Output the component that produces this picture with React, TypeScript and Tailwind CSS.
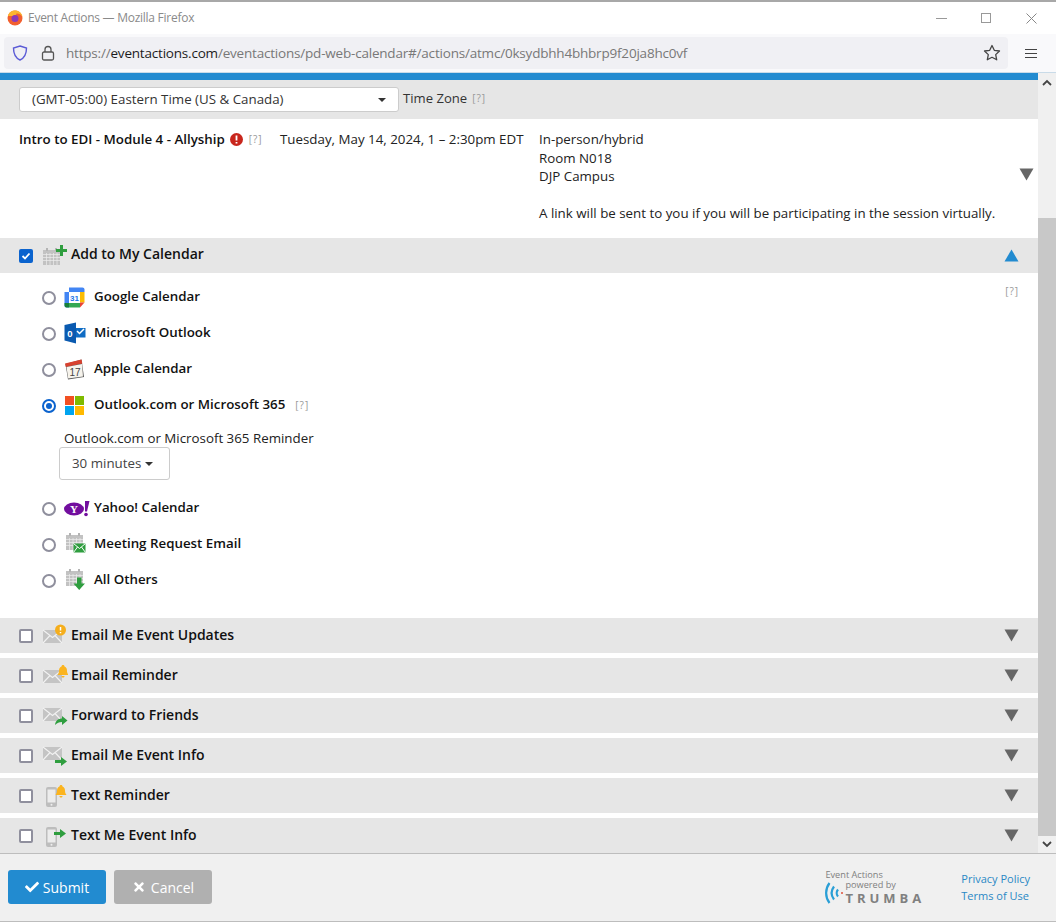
import React from "react";
import { FaCheck, FaTimes } from "react-icons/fa";

const Help = ({ className = "" }: { className?: string }) => (
  <span className={`text-[10px] tracking-[1px] text-[#999] ${className}`}>[?]</span>
);

const Tri = ({ up = false, color = "#666666" }: { up?: boolean; color?: string }) => (
  <svg width="15" height="13" viewBox="0 0 15 13" className="block shrink-0">
    <path d={up ? "M7.5 0.5L14.5 12.5H0.5Z" : "M0.5 0.5H14.5L7.5 12.5Z"} fill={color} />
  </svg>
);

const Cal = ({ x = 0, y = 0 }: { x?: number; y?: number }) => (
  <g transform={`translate(${x} ${y})`}>
    <rect x="0" y="2" width="17" height="15" fill="#c2c2c2" />
    <rect x="3" y="0" width="2" height="3" fill="#b4b4b4" />
    <rect x="12" y="0" width="2" height="3" fill="#b4b4b4" />
    <path d="M0 6.5H17M0 9.5H17M0 12.5H17M3.5 5V17M7 5V17M10.5 5V17M14 5V17" stroke="#ececec" strokeWidth="0.7" />
  </g>
);

const Env = () => (
  <g>
    <path d="M0 3H19V16H0Z" fill="#c4c4c4" />
    <path d="M0 3L9.5 10.5L19 3M0 16L7 8.5M19 16L12 8.5" stroke="#f2f2f2" strokeWidth="1.1" fill="none" />
  </g>
);

const Phone = () => (
  <g>
    <rect x="3" y="2" width="11" height="20" rx="2" fill="#bdbdbd" />
    <rect x="4.5" y="4.5" width="8" height="13" fill="#ececec" />
    <circle cx="8.5" cy="19.7" r="1" fill="#eee" />
  </g>
);

const Bell = ({ x, y }: { x: number; y: number }) => (
  <path
    transform={`translate(${x} ${y})`}
    d="M5 0C6 0 6.5.7 6.5 1.4C8.5 2 9 4 9 6C9 8 10 9 10.5 10H-.5C0 9 1 8 1 6C1 4 1.5 2 3.5 1.4C3.5.7 4 0 5 0ZM3.5 11H6.5C6.5 12 5.8 12.5 5 12.5C4.2 12.5 3.5 12 3.5 11Z"
    fill="#fbb41f"
  />
);

const GreenArrow = ({ x, y }: { x: number; y: number }) => (
  <path transform={`translate(${x} ${y})`} d="M0 3H6V0L12 4.5L6 9V6H0Z" fill="#2f9e3f" />
);

const Svg = ({ children, w = 26, h = 24 }: { children: React.ReactNode; w?: number; h?: number }) => (
  <svg width={w} height={h} viewBox={`0 0 ${w} ${h}`} className="block shrink-0">
    {children}
  </svg>
);

const headerIcons: Record<string, React.ReactNode> = {
  updates: (
    <Svg>
      <g transform="translate(1 3)"><Env /></g>
      <circle cx="18.500" cy="6" r="5.500" fill="#f5ae1c" />
      <path d="M18.500 3V6.500M18.500 8V9.200" stroke="#fff" strokeWidth="1.500" />
    </Svg>
  ),
  reminder: (
    <Svg>
      <g transform="translate(1 3)"><Env /></g>
      <Bell x={16} y={1} />
    </Svg>
  ),
  forward: (
    <Svg>
      <g transform="translate(1 1)"><Env /></g>
      <path d="M13 21C13.500 16.500 16.500 14.500 20 14.500V12L25.500 16.500L20 21V18C17 18 15 19 13 21Z" fill="#2f9e3f" />
    </Svg>
  ),
  info: (
    <Svg>
      <g transform="translate(1 0)"><Env /></g>
      <GreenArrow x={13} y={13} />
    </Svg>
  ),
  text: (
    <Svg>
      <g transform="translate(1 1)"><Phone /></g>
      <Bell x={14} y={1} />
    </Svg>
  ),
  textinfo: (
    <Svg>
      <g transform="translate(1 1)"><Phone /></g>
      <GreenArrow x={12} y={5} />
    </Svg>
  ),
};

const providers: Record<string, React.ReactNode> = {
  google: (
    <svg width="21" height="21" viewBox="0 0 21 21" className="block shrink-0">
      <rect x="0.500" y="0.500" width="20" height="20" rx="2" fill="#fff" />
      <path d="M5 0.500H18.500C19.600 0.500 20.500 1.400 20.500 2.500V5H5Z" fill="#4285f4" />
      <path d="M0.500 5H5V20.500H2.500C1.400 20.500 0.500 19.600 0.500 18.500Z" fill="#4285f4" />
      <path d="M16 5H20.500V15.500H16Z" fill="#fbbc04" />
      <path d="M5 16H16V20.500H5Z" fill="#34a853" />
      <path d="M0.500 16H5V20.500H2.500C1.400 20.500 0.500 19.600 0.500 18.500Z" fill="#188038" />
      <path d="M16 15.500H20.500L16 20.500Z" fill="#ea4335" />
      <text x="10.500" y="14" textAnchor="middle" fontSize="8" fontWeight="700" fill="#1a73e8" fontFamily="Liberation Sans">31</text>
    </svg>
  ),
  outlook: (
    <svg width="22" height="22" viewBox="0 0 22 22" className="block shrink-0">
      <path d="M10 6H21.500V15.500H10Z" fill="#0f6cc4" />
      <path d="M13 9L15.500 11.500L20 7" stroke="#fff" strokeWidth="1.500" fill="none" />
      <path d="M0.500 3L12 0.500V21.500L0.500 18.500Z" fill="#0a5ab0" />
      <text x="6" y="14.500" textAnchor="middle" fontSize="9.500" fontWeight="700" fill="#fff" fontFamily="Liberation Sans">0</text>
    </svg>
  ),
  apple: (
    <svg width="21" height="21" viewBox="0 0 21 21" className="block shrink-0">
      <path d="M1.500 5L17.500 0.500L20 18L4 20.500Z" fill="#555" />
      <path d="M1 4.500L17.500 0.500L18.300 4.500L1.800 8Z" fill="#d8412f" />
      <path d="M2.500 8L18 5L19 17.500L4.200 19.500Z" fill="#f6f3ec" />
      <text x="11" y="16.500" textAnchor="middle" fontSize="10" fill="#444" fontFamily="Liberation Sans">17</text>
    </svg>
  ),
  ms: (
    <svg width="19" height="19" viewBox="0 0 19 19" className="ml-[1px] block shrink-0">
      <rect width="9" height="9" fill="#f25022" />
      <rect x="10" width="9" height="9" fill="#7fba00" />
      <rect y="10" width="9" height="9" fill="#00a4ef" />
      <rect x="10" y="10" width="9" height="9" fill="#ffb900" />
    </svg>
  ),
  yahoo: (
    <svg width="26" height="17" viewBox="0 0 26 17" className="block shrink-0">
      <ellipse cx="10" cy="9" rx="10" ry="6.500" fill="#720e9e" />
      <text x="10" y="13" textAnchor="middle" fontSize="11" fontWeight="700" fill="#fff" fontFamily="Liberation Serif">Y</text>
      <path d="M21 1H25.500L23 11.500H21Z" fill="#720e9e" />
      <circle cx="22" cy="14.500" r="1.800" fill="#720e9e" />
    </svg>
  ),
  mail: (
    <svg width="22" height="22" viewBox="0 0 22 22" className="block shrink-0">
      <Cal x={2} y={0} />
      <rect x="9.500" y="10.500" width="12" height="9" fill="#2f9e3f" />
      <path d="M9.500 10.500L15.500 15.500L21.500 10.500M9.500 19.500L13.500 14M21.500 19.500L17.500 14" stroke="#fff" strokeWidth="1" fill="none" />
    </svg>
  ),
  others: (
    <svg width="22" height="24" viewBox="0 0 22 24" className="block shrink-0">
      <Cal x={2} y={1} />
      <path d="M13 9.500H17.500V15.500H21L15.200 22L9.500 15.500H13Z" fill="#2f9e3f" />
    </svg>
  ),
};

const Radio = ({ on = false }: { on?: boolean }) =>
  on ? (
    <span className="flex h-[14px] w-[14px] shrink-0 items-center justify-center rounded-full border-2 border-[#0b63ce] bg-white">
      <span className="block h-[6px] w-[6px] rounded-full bg-[#0b63ce]" />
    </span>
  ) : (
    <span className="block h-[14px] w-[14px] shrink-0 rounded-full border-2 border-[#8f8f9d] bg-white" />
  );

const ProviderRow = ({
  icon,
  label,
  help = false,
}: {
  icon: string;
  label: string;
  help?: boolean;
}) => (
  <div className="flex h-[36px] items-center">
    <span className="ml-[42px] mt-[2px] block">
      <Radio on={icon === "ms"} />
    </span>
    <span className="ml-[8px] flex w-[30px] shrink-0 items-center">{providers[icon]}</span>
    <span className="mb-[2px] text-[13.330px] font-semibold leading-[18px] text-[#111]">{label}</span>
    {help && <Help className="ml-[10px]" />}
  </div>
);

const Row = ({ icon, label }: { icon: string; label: string }) => (
  <div className="mb-[5px] flex h-[35px] items-center bg-[#e6e6e6] last:mb-0">
    <span className="ml-[19px] block h-[14px] w-[14px] shrink-0 rounded-[2px] border-2 border-[#8f8f9d] bg-white" />
    <span className="ml-[9px] flex w-[29px] shrink-0 items-center">{headerIcons[icon]}</span>
    <span className="mb-[3px] flex-1 text-[14px] font-semibold text-[#111]">{label}</span>
    <span className="mr-[19px] block">
      <Tri />
    </span>
  </div>
);

export default function App() {
  return (
    <div className="flex h-[923px] w-[1056px] flex-col overflow-hidden bg-white font-['Open_Sans',sans-serif] text-[13.330px] text-[#222]">
      <div className="h-[2px] shrink-0 bg-[#a8a8a8]" />
      {/* title bar */}
      <div className="flex h-[32px] shrink-0 items-center bg-white pl-[7px]">
        <svg width="16" height="16" viewBox="0 0 16 16" className="shrink-0">
          <circle cx="8" cy="8" r="7.500" fill="#f2602f" />
          <path d="M1 6C2 2 5 .500 8 .500C12 .500 15 3 15.500 7C14 4 11 3 9 3.500C11 4 7 6 5 6C3.500 6 2 6 1 6Z" fill="#fdb62f" />
          <circle cx="8" cy="8.500" r="3.500" fill="#8c3bb8" />
        </svg>
        <span className="ml-[5px] flex-1 text-[12px] tracking-[-0.260px] text-[#8a8a8a]">Event Actions — Mozilla Firefox</span>
        <div className="flex items-center pr-[19px]">
          <span className="mr-[34px] block h-px w-[11px] bg-[#999]" />
          <span className="mr-[35px] block h-[10px] w-[10px] border border-[#999]" />
          <svg width="11" height="11" viewBox="0 0 11 11"><path d="M.5.500L10.500 10.500M10.500.500L.5 10.500" stroke="#888" strokeWidth="1" /></svg>
        </div>
      </div>
      {/* toolbar */}
      <div className="flex h-[39px] shrink-0 items-center border-b border-[#c9dbe8] bg-[#f9f9fb] pl-[4px]">
        <div className="flex h-[32px] w-[1004px] items-center rounded-[4px] bg-[#f0f0f4]">
          <svg width="16" height="16" viewBox="0 0 16 16" className="ml-[8px] shrink-0">
            <path d="M8 1L14.500 3C14.500 9 12.500 13 8 15C3.500 13 1.500 9 1.500 3Z" fill="none" stroke="#5b5bd6" strokeWidth="1.400" />
          </svg>
          <svg width="16" height="16" viewBox="0 0 16 16" className="ml-[12px] shrink-0">
            <rect x="2.500" y="7" width="11" height="8" rx="1.500" fill="none" stroke="#555" strokeWidth="1.300" />
            <path d="M5 7V4.500C5 2.800 6.300 1.500 8 1.500C9.700 1.500 11 2.800 11 4.500V7" fill="none" stroke="#555" strokeWidth="1.300" />
          </svg>
          <span className="ml-[10px] flex-1 whitespace-nowrap text-[13.500px] tracking-[-0.200px] text-[#787878]">
            https://<span className="text-[#1c1c1c]">eventactions.com</span>/eventactions/pd-web-calendar#/actions/atmc/0ksydbhh4bhbrp9f20ja8hc0vf
          </span>
          <svg width="18" height="18" viewBox="0 0 18 18" className="mr-[7px] shrink-0">
            <path d="M9 1.500L11.300 6.300L16.500 7L12.700 10.600L13.700 15.800L9 13.300L4.300 15.800L5.300 10.600L1.500 7L6.700 6.300Z" fill="none" stroke="#444" strokeWidth="1.300" strokeLinejoin="round" />
          </svg>
        </div>
        <div className="ml-[17px] flex w-[12px] flex-col gap-[3px]">
          <span className="block h-px bg-[#444]" />
          <span className="block h-px bg-[#444]" />
          <span className="block h-px bg-[#444]" />
        </div>
      </div>
      {/* scroll area */}
      <div className="flex h-[780px] shrink-0">
        <div className="flex w-[1038px] shrink-0 flex-col">
          <div className="h-[7px] shrink-0 bg-[#228bd0]" />
          <div className="flex h-[39px] shrink-0 items-center bg-[#e6e6e6] pl-[19px]">
            <div className="flex h-[25px] w-[380px] items-center justify-between rounded-[3px] border border-[#ccc] bg-white pl-[12px] pr-[12px]">
              <span className="text-[#333]">(GMT-05:00) Eastern Time (US &amp; Canada)</span>
              <span className="block h-0 w-0 border-x-[4px] border-t-[4px] border-x-transparent border-t-[#333]" />
            </div>
            <span className="mb-[2px] ml-[4px] text-[13.100px] text-[#333]">Time Zone</span>
            <Help className="mb-[2px] ml-[5px]" />
          </div>
          <div className="flex h-[119px] shrink-0 bg-white pl-[19px] pt-[11px] leading-[18.500px]">
            <div className="flex w-[261px] shrink-0 items-start">
              <span className="font-semibold text-[#111]">Intro to EDI - Module 4 - Allyship</span>
              <svg width="13" height="13" viewBox="0 0 13 13" className="ml-[5px] mt-[3px] shrink-0">
                <circle cx="6.500" cy="6.500" r="6.500" fill="#c8261c" />
                <path d="M6.500 2.500V7.500M6.500 9V10.500" stroke="#fff" strokeWidth="1.800" />
              </svg>
              <Help className="ml-[6px]" />
            </div>
            <div className="w-[259px] shrink-0">Tuesday, May 14, 2024, 1 – 2:30pm EDT</div>
            <div className="flex-1">
              <div>In-person/hybrid</div>
              <div>Room N018</div>
              <div>DJP Campus</div>
              <div>&nbsp;</div>
              <div>A link will be sent to you if you will be participating in the session virtually.</div>
            </div>
            <div className="mr-[4px] mt-[38px]">
              <Tri />
            </div>
          </div>
          {/* open section */}
          <div className="flex h-[35px] shrink-0 items-center bg-[#e6e6e6]">
            <span className="ml-[19px] flex h-[14px] w-[14px] shrink-0 items-center justify-center rounded-[2px] bg-[#0b63ce] text-white">
              <svg width="10" height="10" viewBox="0 0 10 10"><path d="M1.500 5L4 7.500L8.500 2.500" stroke="#fff" strokeWidth="1.800" fill="none" /></svg>
            </span>
            <span className="ml-[9px] flex w-[29px] shrink-0 items-center">
              <Svg>
                <Cal x={1} y={4} />
                <path d="M14 5H18V1H21V5H25V8H21V12H18V8H14Z" fill="#2f9e3f" />
              </Svg>
            </span>
            <span className="mb-[5px] flex-1 text-[14px] font-semibold text-[#111]">Add to My Calendar</span>
            <span className="mr-[19px] block">
              <Tri up color="#228bd0" />
            </span>
          </div>
          <div className="relative h-[345px] shrink-0 bg-white pt-[6px]">
            <Help className="absolute right-[19px] top-[11px]" />
            <ProviderRow icon="google" label="Google Calendar" />
            <ProviderRow icon="outlook" label="Microsoft Outlook" />
            <ProviderRow icon="apple" label="Apple Calendar" />
            <ProviderRow icon="ms" label="Outlook.com or Microsoft 365" help />
            <div className="flex flex-col pl-[59px] pt-[6px]">
              <span className="pl-[5px] leading-[18px]">Outlook.com or Microsoft 365 Reminder</span>
              <div className="flex h-[33px] w-[111px] items-center rounded-[3px] border border-[#ccc] bg-white pl-[12px]">
                <span className="mt-[1px] text-[#444]">30 minutes</span>
                <span className="ml-[4px] block h-0 w-0 border-x-[4px] border-t-[4px] border-x-transparent border-t-[#333]" />
              </div>
            </div>
            <div className="mt-[10px]">
              <ProviderRow icon="yahoo" label="Yahoo! Calendar" />
              <ProviderRow icon="mail" label="Meeting Request Email" />
              <ProviderRow icon="others" label="All Others" />
            </div>
          </div>
          <Row icon="updates" label="Email Me Event Updates" />
          <Row icon="reminder" label="Email Reminder" />
          <Row icon="forward" label="Forward to Friends" />
          <Row icon="info" label="Email Me Event Info" />
          <Row icon="text" label="Text Reminder" />
          <Row icon="textinfo" label="Text Me Event Info" />
        </div>
        {/* scrollbar */}
        <div className="flex w-[18px] shrink-0 flex-col bg-[#f0f0f0]">
          <div className="flex h-[145px] shrink-0 justify-center pt-[6px]">
            <svg width="10" height="7" viewBox="0 0 10 7"><path d="M1 6L5 2L9 6" stroke="#444" strokeWidth="1.800" fill="none" /></svg>
          </div>
          <div className="flex-1 bg-[#c8c8c8]" />
          <div className="flex h-[17px] shrink-0 items-center justify-center">
            <svg width="10" height="7" viewBox="0 0 10 7"><path d="M1 1L5 5L9 1" stroke="#444" strokeWidth="1.800" fill="none" /></svg>
          </div>
        </div>
      </div>
      {/* footer */}
      <div className="flex h-[69px] shrink-0 items-center border-y border-[#bdbdbd] bg-[#f0f0f0] pl-[8px]">
        <button className="mb-[1px] flex h-[34px] w-[98px] items-center justify-center gap-[4px] rounded-[3px] bg-[#228bd0] text-[14px] text-white">
          <FaCheck size={14} /> Submit
        </button>
        <button className="mb-[1px] ml-[8px] flex h-[34px] w-[98px] items-center justify-center gap-[5px] rounded-[3px] bg-[#b0b0b0] text-[14px] text-white">
          <FaTimes size={14} /> Cancel
        </button>
        <div className="mb-[1px] ml-auto mr-[36px] flex flex-col text-[#808080]">
          <span className="pl-[1px] text-[9.200px] leading-[10px]">Event Actions</span>
          <div className="flex">
            <svg width="20" height="22" viewBox="0 0 20 22" className="mt-[2px] shrink-0">
              <path d="M5.500 1C1 7 1 15 5.500 21M10 4.500C7 8.500 7 13.500 10 17.500M14 7.500C12.300 9.500 12.300 12.500 14 14.500" stroke="#2a9fd6" strokeWidth="2.200" fill="none" />
              <circle cx="18" cy="11" r="1" fill="#e0503a" />
            </svg>
            <div className="ml-[1px] flex flex-col">
              <span className="text-[9.200px] leading-[10px]">powered by</span>
              <span className="mt-[2px] text-[13px] font-bold leading-[13px] tracking-[4px]">TRUMBA</span>
            </div>
          </div>
        </div>
        <div className="mb-[1px] mr-[26px] flex flex-col gap-[3px] text-[11px] leading-[14px] text-[#2a88c5]">
          <span>Privacy Policy</span>
          <span>Terms of Use</span>
        </div>
      </div>
    </div>
  );
}
